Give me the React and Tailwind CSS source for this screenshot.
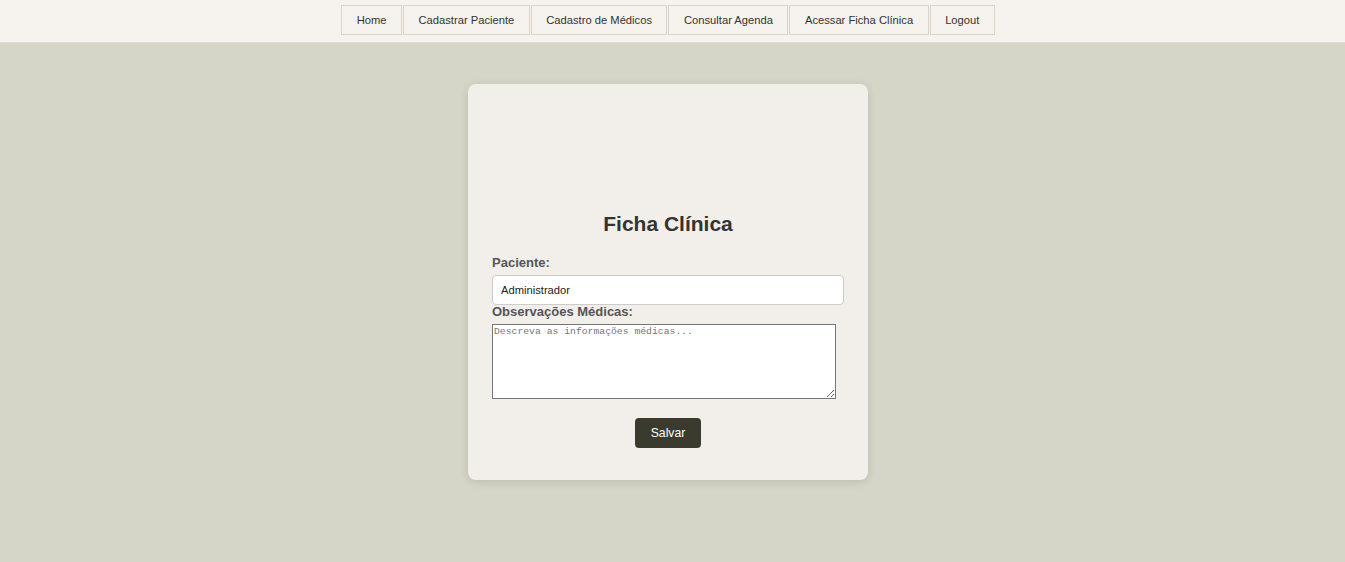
export default function App() {
  const nav = ["Home", "Cadastrar Paciente", "Cadastro de Médicos", "Consultar Agenda", "Acessar Ficha Clínica", "Logout"];
  return (
    <div className="min-h-[562px] bg-[#d5d6c8] font-['Liberation_Sans',Arial,sans-serif]">
      <header className="h-[43px] bg-[#f6f2ed] border-b border-[#e2ddd4] flex justify-center pt-[5px] pr-[9px]">
        <nav className="flex gap-px h-[30px]">
          {nav.map((n) => (
            <a key={n} className="h-[30px] px-[14.5px] flex items-center border border-[#dcd3c8] bg-[#f6f2ed] text-[11.2px] text-[#333] cursor-pointer">
              {n}
            </a>
          ))}
        </nav>
      </header>
      <main className="flex justify-center pt-[41px] pr-[9px]">
        <div className="w-[400px] bg-[#f2efea] rounded-[8px] shadow-[0_2px_10px_rgba(0,0,0,0.12)] px-[24px] pt-[24px] pb-[32px]">
          <div className="h-[104px]" />
          <h2 className="text-[21px] leading-[24px] font-bold text-[#333] text-center">Ficha Clínica</h2>
          <div className="mt-[19px]">
            <label className="block text-[13px] leading-[16px] font-bold text-[#555]">Paciente:</label>
            <input
              className="mt-[4px] block w-[352px] h-[30px] bg-white border border-[#ccc] rounded-[4px] px-[8px] text-[11.2px] text-[#222] outline-none"
              defaultValue="Administrador"
            />
            <label className="block text-[13px] leading-[16px] font-bold text-[#555] mt-[-1px]">Observações Médicas:</label>
            <textarea
              className="mt-[4px] block w-[344px] h-[75px] bg-white border border-[#767676] px-[1px] py-[1px] text-[9.75px] leading-[12px] font-['Liberation_Mono',monospace] placeholder:text-[#757575] resize-y"
              placeholder="Descreva as informações médicas..."
            />
          </div>
          <div className="flex justify-center mt-[19px]">
            <button className="h-[30px] px-[16px] bg-[#3b3a2e] text-white text-[12.2px] rounded-[4px]">Salvar</button>
          </div>
        </div>
      </main>
    </div>
  );
}
